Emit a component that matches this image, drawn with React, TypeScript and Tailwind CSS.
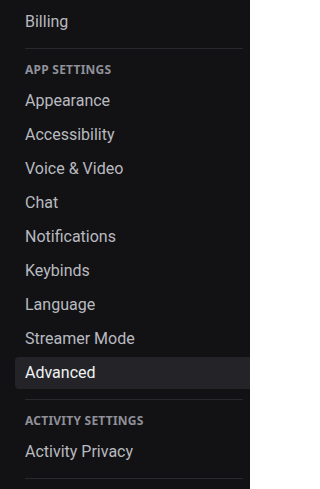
import React from "react";

const appItems = [
  "Appearance",
  "Accessibility",
  "Voice & Video",
  "Chat",
  "Notifications",
  "Keybinds",
  "Language",
  "Streamer Mode",
  "Advanced",
];

const Item = ({ label, active }: { label: string; active?: boolean }) => (
  <div
    className={`flex h-8 items-center rounded-l-[4px] px-2.5 text-[16px] leading-5 mb-0.5 ${
      active ? "bg-[#242428] text-[#f2f3f5]" : "text-[#b9bac0]"
    }`}
  >
    {label}
  </div>
);

const Divider = () => <div className="mt-[10px] mb-[13px] ml-2.5 mr-[7px] h-px bg-[#29292d]" />;

const Header = ({ label }: { label: string }) => (
  <div
    className="mb-[7px] px-2.5 text-[12px] font-bold uppercase leading-4 tracking-[0.02em] text-[#8f9099]"
    style={{ fontFamily: '"Noto Sans", sans-serif' }}
  >
    {label}
  </div>
);

export default function App() {
  return (
    <div
      className="h-[489px] w-[250px] overflow-hidden bg-[#121214] pt-[6px] pl-[15px]"
      style={{ fontFamily: 'Roboto, "Noto Sans", sans-serif' }}
    >
      <Item label="Billing" />
      <Divider />
      <Header label="App Settings" />
      {appItems.map((l) => (
        <Item key={l} label={l} active={l === "Advanced"} />
      ))}
      <Divider />
      <Header label="Activity Settings" />
      <Item label="Activity Privacy" />
      <Divider />
    </div>
  );
}
